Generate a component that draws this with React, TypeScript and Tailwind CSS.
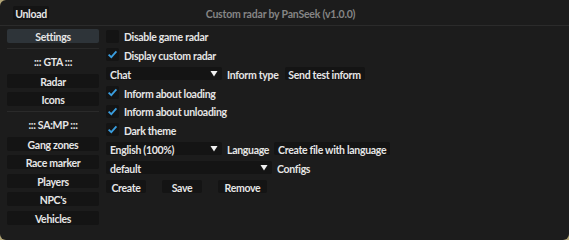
const font = { fontFamily: "Lato, 'Liberation Sans', sans-serif" };

const txt = "whitespace-nowrap text-[10.5px] font-bold tracking-[-0.3px] text-[#e6e6e6]";

function Label({ children }: { children: React.ReactNode }) {
  return <span className={`translate-y-[1.5px] ${txt}`}>{children}</span>;
}

function Btn({ label, active }: { label: string; active?: boolean }) {
  return (
    <div
      className={`h-[14px] w-full flex items-center justify-center rounded-[2px] ${
        active ? "bg-[#2e3439]" : "bg-[#141414]"
      }`}
    >
      <Label>{label}</Label>
    </div>
  );
}

function Header({ label }: { label: string }) {
  return (
    <div className="flex flex-col">
      <div className="mt-[5px] h-px bg-[#2a2a2a]" />
      <div className="h-[24.5px] flex items-center justify-center">
        <Label>{label}</Label>
      </div>
    </div>
  );
}

function Check({ label, checked }: { label: string; checked?: boolean }) {
  return (
    <div className="h-[13px] flex items-center gap-[5px]">
      <div className="w-[13px] h-[13px] rounded-[2px] bg-[#141414] flex items-center justify-center">
        {checked && (
          <svg width="11" height="11" viewBox="0 0 11 11">
            <path d="M1.6 5.6 L4.3 8.2 L9.4 2.4" fill="none" stroke="#3a9ee0" strokeWidth="1.8" />
          </svg>
        )}
      </div>
      <Label>{label}</Label>
    </div>
  );
}

function Combo({ value, w }: { value: string; w: string }) {
  return (
    <div className={`h-[13px] ${w} rounded-[2px] bg-[#141414] flex items-center justify-between pl-[4px] pr-[4px]`}>
      <Label>{value}</Label>
      <svg width="8" height="7" viewBox="0 0 8 7">
        <path d="M0.5 1 L7.5 1 L4 6.5 Z" fill="#f0f0f0" />
      </svg>
    </div>
  );
}

function SmallBtn({ label, w }: { label: string; w: string }) {
  return (
    <div className={`h-[13px] ${w} shrink-0 rounded-[2px] bg-[#141414] flex items-center justify-center`}>
      <Label>{label}</Label>
    </div>
  );
}

export default function App() {
  return (
    <div className="w-[569px] h-[240px] bg-[#b3a677]" style={font}>
      <div className="w-full h-full bg-[#1c1c1c] rounded-tl-[6px] rounded-b-[6px] flex flex-col">
        <div className="h-[26px] shrink-0 grid grid-cols-[1fr_auto_1fr] items-center border-b border-[#2b2b2b]">
          <div className="pl-[13px]">
            <div className="w-[36px] h-[14px] rounded-[2px] bg-[#141414] flex items-center justify-center">
              <Label>Unload</Label>
            </div>
          </div>
          <div className="pr-[8px] translate-y-[1.5px] whitespace-nowrap text-[10.5px] font-bold tracking-[-0.2px] text-[#858585]">
            Custom radar by PanSeek (v1.0.0)
          </div>
          <div />
        </div>

        <div className="flex pl-[7px] pt-[3px] gap-[7px]">
          <div className="w-[92px] shrink-0 flex flex-col">
            <Btn label="Settings" active />
            <Header label="::: GTA :::" />
            <div className="flex flex-col gap-[4.5px]">
              <Btn label="Radar" />
              <Btn label="Icons" />
            </div>
            <Header label="::: SA:MP :::" />
            <div className="flex flex-col gap-[4.5px]">
              <Btn label="Gang zones" />
              <Btn label="Race marker" />
              <Btn label="Players" />
              <Btn label="NPC's" />
              <Btn label="Vehicles" />
            </div>
          </div>

          <div className="flex flex-col gap-[5.8px] pt-[0.5px]">
            <Check label="Disable game radar" />
            <Check label="Display custom radar" checked />
            <div className="h-[13px] flex items-center gap-[5px]">
              <Combo value="Chat" w="w-[116px]" />
              <Label>Inform type</Label>
              <SmallBtn label="Send test inform" w="w-[80px] ml-[1px]" />
            </div>
            <Check label="Inform about loading" checked />
            <Check label="Inform about unloading" checked />
            <Check label="Dark theme" checked />
            <div className="h-[13px] flex items-center gap-[5px]">
              <Combo value="English (100%)" w="w-[116px]" />
              <Label>Language</Label>
              <SmallBtn label="Create file with language" w="w-[116px]" />
            </div>
            <div className="h-[13px] flex items-center gap-[5px]">
              <Combo value="default" w="w-[166px]" />
              <Label>Configs</Label>
            </div>
            <div className="h-[13px] flex items-center gap-[16px]">
              <SmallBtn label="Create" w="w-[40px]" />
              <SmallBtn label="Save" w="w-[40px]" />
              <SmallBtn label="Remove" w="w-[49px]" />
            </div>
          </div>
        </div>
      </div>
    </div>
  );
}
